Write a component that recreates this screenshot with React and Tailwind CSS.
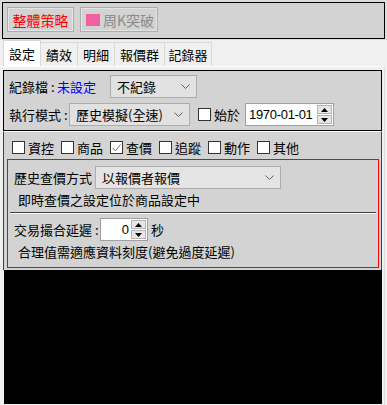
import React from "react";

function Chevron() {
  return (
    <svg width="9" height="5" viewBox="0 0 9 5" className="shrink-0">
      <polyline points="0.5,0.5 4.5,4.5 8.5,0.5" fill="none" stroke="#606060" strokeWidth="1" />
    </svg>
  );
}

function Spin() {
  return (
    <div className="flex flex-col w-[15px] h-[19px] gap-[1px] shrink-0">
      <div className="flex-1 bg-[#e6e6e6] border border-[#b4b4b4] flex items-center justify-center">
        <svg width="7" height="4" viewBox="0 0 7 4"><polygon points="0,4 3.5,0 7,4" fill="#000" /></svg>
      </div>
      <div className="flex-1 bg-[#e6e6e6] border border-[#b4b4b4] flex items-center justify-center">
        <svg width="7" height="4" viewBox="0 0 7 4"><polygon points="0,0 3.5,4 7,0" fill="#000" /></svg>
      </div>
    </div>
  );
}

function Check({ checked }) {
  return (
    <div className="w-[13px] h-[13px] border border-[#333] bg-white shrink-0 flex items-center justify-center">
      {checked && (
        <svg width="9" height="8" viewBox="0 0 9 8">
          <polyline points="0.5,4 3.5,7 8.5,0.5" fill="none" stroke="#777" strokeWidth="1" />
        </svg>
      )}
    </div>
  );
}

function Select({ w, text, bg = "bg-[#e1e1e1]" }) {
  return (
    <div className={`${w} h-[23px] ${bg} border border-[#adadad] flex items-center justify-between pl-[6px] pr-[6px]`}>
      <span className="leading-[16px]">{text}</span>
      <Chevron />
    </div>
  );
}

export default function App() {
  const checks = [
    ["資控", false],
    ["商品", false],
    ["查價", true],
    ["追蹤", false],
    ["動作", false],
    ["其他", false],
  ];
  return (
    <div className="w-[387px] h-[405px] bg-[#f0f0f0] flex flex-col overflow-hidden font-['Noto_Sans_CJK_TC',sans-serif] text-[13px] text-black">
      {/* toolbar */}
      <div className="h-[40px] shrink-0 pt-[2px] pl-[2px] bg-[#dcdcdc]">
        <div className="w-[383px] h-[37px] border border-black bg-[#d3d3d3] flex items-start gap-[6px] pt-[4px] pl-[4px]">
          <div className="w-[67px] h-[25px] border border-[#adadad] shadow-[inset_0_0_0_1px_#e4e4e4] flex items-center justify-center text-[14px] leading-[16px] text-[#ff0000]">
            整體策略
          </div>
          <div className="w-[78px] h-[25px] border border-[#adadad] shadow-[inset_0_0_0_1px_#e4e4e4] flex items-center pl-[5px] gap-[3px] text-[14px] leading-[16px] text-[#8c8c8c]">
            <div className="w-[14px] h-[12px] bg-[#f25fa5] shrink-0" />
            <span>周K突破</span>
          </div>
        </div>
      </div>

      {/* tabs */}
      <div className="h-[26px] shrink-0 flex items-end pl-[3px]">
        <div className="w-[38px] h-[26px] bg-white border border-b-0 border-[#d9d9d9] flex items-center justify-center leading-[16px]">設定</div>
        <div className="w-[37px] h-[24px] bg-[#f0f0f0] border border-b-0 border-l-0 border-[#d9d9d9] flex items-center justify-center leading-[16px]">績效</div>
        <div className="w-[37px] h-[24px] bg-[#f0f0f0] border border-b-0 border-l-0 border-[#d9d9d9] flex items-center justify-center leading-[16px]">明細</div>
        <div className="w-[50px] h-[24px] bg-[#f0f0f0] border border-b-0 border-l-0 border-[#d9d9d9] flex items-center justify-center leading-[16px]">報價群</div>
        <div className="w-[47px] h-[24px] bg-[#f0f0f0] border border-b-0 border-l-0 border-[#d9d9d9] flex items-center justify-center leading-[16px]">記錄器</div>
      </div>

      {/* content frame */}
      <div className="w-[385px] flex-1 flex flex-col border-t border-white border-r border-r-[#dcdcdc] pl-[3px] pt-[3px]">
        {/* panel 1 */}
        <div className="w-[379px] h-[61px] shrink-0 border border-black bg-[#d3d3d3] flex flex-col gap-[5px] pt-[4px] pl-[5px]">
          <div className="h-[23px] flex items-center">
            <span className="w-[48px] leading-[16px] flex">
              <span>紀錄檔</span>
              <span className="ml-[3px]">:</span>
            </span>
            <span className="w-[39px] leading-[16px] text-[#0000ff]">未設定</span>
            <div className="ml-[14px]">
              <Select w="w-[87px]" text="不紀錄" />
            </div>
          </div>
          <div className="h-[23px] flex items-center">
            <span className="w-[60px] leading-[16px] flex">
              <span>執行模式</span>
              <span className="ml-[3px]">:</span>
            </span>
            <Select w="w-[121px]" text="歷史模擬(全速)" />
            <div className="ml-[8px]">
              <Check checked={false} />
            </div>
            <span className="ml-[3px] w-[26px] leading-[16px]">始於</span>
            <div className="ml-[5px] w-[89px] h-[23px] bg-white border border-[#a0a0a0] flex items-center justify-between pl-[3px] pr-[1px]">
              <span className="font-['Liberation_Sans',sans-serif] text-[13px] tracking-[-0.3px] leading-[16px]">1970-01-01</span>
              <Spin />
            </div>
          </div>
        </div>

        {/* panel 2 */}
        <div className="w-[379px] h-[139px] shrink-0 border-x border-[#404040] border-t border-t-white bg-[#d3d3d3] flex flex-col pt-[9px]">
          <div className="h-[13px] flex items-center ml-[8px] gap-[7px]">
            {checks.map(([t, c]) => (
              <div key={t} className="flex items-center gap-[3px]">
                <Check checked={c} />
                <span className="leading-[16px]">{t}</span>
              </div>
            ))}
          </div>
          <div className="mt-[5px] ml-[3px] w-[372px] h-[109px] border border-[#ff0000] flex flex-col pt-[6px]">
            <div className="h-[23px] flex items-center pl-[6px]">
              <span className="w-[81px] leading-[16px]">歷史查價方式</span>
              <Select w="w-[186px]" text="以報價者報價" bg="bg-[#e4e4e4]" />
            </div>
            <div className="mt-[3px] h-[16px] pl-[10px] leading-[16px]">即時查價之設定位於商品設定中</div>
            <div className="mt-[4px] mx-[2px] h-[2px] border-t border-[#404040] border-b border-b-white" />
            <div className="mt-[4px] h-[23px] flex items-center pl-[6px]">
              <span className="w-[86px] leading-[16px] flex">
                <span>交易撮合延遲</span>
                <span className="ml-[3px]">:</span>
              </span>
              <div className="w-[48px] h-[23px] bg-white border border-[#a0a0a0] flex items-center justify-end pr-[1px] gap-[2px]">
                <span className="font-['Liberation_Sans',sans-serif] text-[13px] leading-[16px]">0</span>
                <Spin />
              </div>
              <span className="ml-[3px] leading-[16px]">秒</span>
            </div>
            <div className="mt-[3px] h-[16px] pl-[10px] leading-[16px]">合理值需適應資料刻度(避免過度延遲)</div>
          </div>
        </div>

        {/* black area */}
        <div className="ml-[1px] w-[378px] h-[134px] shrink-0 bg-black" />
      </div>
    </div>
  );
}
